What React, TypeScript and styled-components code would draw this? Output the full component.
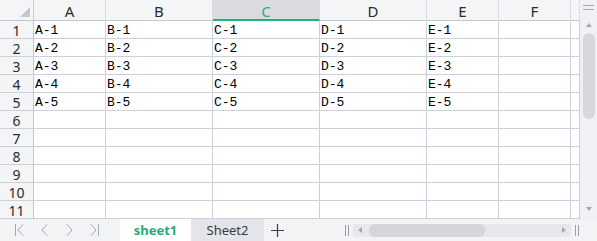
import styled, { createGlobalStyle } from "styled-components";

const GlobalStyle = createGlobalStyle`
  body {
    margin: 0;
    background: #ffffff;
  }
`;

const COLS = "34px 72px 107px 107px 107px 72px 72px 9px";
const LETTERS = ["A", "B", "C", "D", "E", "F"];
const SELECTED = "C";

const Book = styled.div`
  width: 597px;
  height: 241px;
  display: flex;
  flex-direction: column;
  overflow: hidden;
  font-family: "Noto Sans", "Liberation Sans", sans-serif;
`;

const Body = styled.div`
  display: flex;
  flex-direction: row;
  height: 219px;
`;

const Sheet = styled.div`
  width: 580px;
  display: flex;
  flex-direction: column;
`;

const Row = styled.div<{ $head?: boolean }>`
  display: grid;
  grid-template-columns: ${COLS};
  grid-template-rows: minmax(0, 1fr);
  height: ${(p) => (p.$head ? "21px" : "18px")};
  flex-shrink: 0;
  overflow: hidden;
  background: ${(p) => (p.$head ? "#f4f5f7" : "#ffffff")};

  & > * {
    box-sizing: border-box;
    min-height: 0;
  }
`;

const Corner = styled.div`
  position: relative;
  background: #f4f5f7;
  border-right: 1px solid #c9ccd6;
  border-bottom: 1px solid #c2c6d1;

  &::after {
    content: "";
    position: absolute;
    right: 3px;
    bottom: 3px;
    width: 0;
    height: 0;
    border-left: 10px solid transparent;
    border-bottom: 10px solid #c4c7ce;
  }
`;

const ColHead = styled.div<{ $active?: boolean }>`
  display: flex;
  align-items: center;
  justify-content: center;
  font-size: 15px;
  line-height: 16px;
  padding-top: 2px;
  color: ${(p) => (p.$active ? "#2aae86" : "#2b2b2b")};
  background: ${(p) => (p.$active ? "#d9dbe1" : "#f4f5f7")};
  border-right: 1px solid #dcdee5;
  border-bottom: ${(p) => (p.$active ? "2px solid #1fb27a" : "1px solid #c2c6d1")};
`;

const RowHead = styled.div`
  display: flex;
  align-items: center;
  justify-content: center;
  font-size: 14px;
  line-height: 15px;
  padding-top: 2px;
  color: #2b2b2b;
  background: #f4f5f7;
  border-right: 1px solid #c2c6d1;
  border-bottom: 1px solid #cdd0da;
`;

const Cell = styled.div`
  font-family: "Liberation Mono", "DejaVu Sans Mono", monospace;
  font-size: 13px;
  line-height: 15px;
  padding: 2px 0 0 1px;
  color: #000000;
  border-right: 1px solid #cdd0da;
  border-bottom: 1px solid #cdd0da;
  white-space: nowrap;
  overflow: hidden;
`;

const VScroll = styled.div`
  width: 17px;
  background: #f0f1f4;
  display: flex;
  flex-direction: column;
  align-items: center;
`;

const Grip = styled.div`
  margin-top: 5px;
  width: 11px;
  height: 3px;
  border-top: 1px solid #a9adb6;
  border-bottom: 1px solid #a9adb6;
`;

const Arrow = styled.div<{ $dir: "up" | "down" | "left" | "right" }>`
  width: 0;
  height: 0;
  border: 3px solid transparent;
  ${(p) => p.$dir === "up" && "border-bottom: 4px solid #a4a8b1; border-top-width: 0;"}
  ${(p) => p.$dir === "down" && "border-top: 4px solid #a4a8b1; border-bottom-width: 0;"}
  ${(p) => p.$dir === "left" && "border-right: 4px solid #a4a8b1; border-left-width: 0;"}
  ${(p) => p.$dir === "right" && "border-left: 4px solid #a4a8b1; border-right-width: 0;"}
`;

const VTrack = styled.div`
  flex: 1;
  width: 100%;
  display: flex;
  flex-direction: column;
  align-items: center;
  padding: 13px 0 8px;
  box-sizing: border-box;
`;

const VThumb = styled.div`
  margin-top: 6px;
  width: 12px;
  height: 86px;
  border-radius: 6px;
  background: #d6d8dd;
`;

const Spacer = styled.div`
  flex: 1;
`;

const Bar = styled.div`
  height: 22px;
  display: flex;
  flex-direction: row;
  align-items: stretch;
  background: #f2f3f5;
`;

const Nav = styled.div`
  width: 120px;
  display: flex;
  align-items: center;
  padding-left: 14px;
  gap: 14px;
  box-sizing: border-box;
`;

const Tab = styled.div<{ $active?: boolean }>`
  width: ${(p) => (p.$active ? "71px" : "73px")};
  display: flex;
  align-items: center;
  justify-content: center;
  font-size: 13px;
  font-weight: ${(p) => (p.$active ? 700 : 400)};
  color: ${(p) => (p.$active ? "#1fae78" : "#3c3c3c")};
  background: ${(p) => (p.$active ? "#ffffff" : "#e3e5ea")};
`;

const Plus = styled.div`
  width: 26px;
  display: flex;
  align-items: center;
  justify-content: center;
`;

const Split = styled.div`
  width: 4px;
  height: 11px;
  margin: 0 4px;
  align-self: center;
  border-left: 1px solid #9a9ea7;
  border-right: 1px solid #9a9ea7;
  box-sizing: border-box;
`;

const HTrack = styled.div`
  width: 218px;
  height: 13px;
  align-self: center;
  background: #e7e8ec;
  display: flex;
  align-items: center;
  padding: 0 5px 0 5px;
  box-sizing: border-box;
`;

const HThumb = styled.div`
  margin-left: 7px;
  width: 116px;
  height: 13px;
  border-radius: 6px;
  background: #d4d6dc;
`;

const NavIcon = ({ kind }: { kind: "first" | "prev" | "next" | "last" }) => (
  <svg width="11" height="14" viewBox="0 0 11 14" fill="none" stroke="#a3a7b0" strokeWidth="1">
    {kind === "first" && (
      <>
        <path d="M1.5 1v12" />
        <path d="M9 1.5L4 7l5 5.5" />
      </>
    )}
    {kind === "prev" && <path d="M8 1.5L3 7l5 5.5" />}
    {kind === "next" && <path d="M3 1.5L8 7l-5 5.5" />}
    {kind === "last" && (
      <>
        <path d="M2 1.5L7 7l-5 5.5" />
        <path d="M9.5 1v12" />
      </>
    )}
  </svg>
);

const data: string[][] = [1, 2, 3, 4, 5].map((n) => LETTERS.slice(0, 5).map((l) => `${l}-${n}`));

export default function App() {
  const rows = Array.from({ length: 11 }, (_, i) => i + 1);
  return (
    <>
      <GlobalStyle />
      <Book>
        <Body>
          <Sheet>
            <Row $head>
              <Corner />
              {LETTERS.map((l) => (
                <ColHead key={l} $active={l === SELECTED}>
                  {l}
                </ColHead>
              ))}
              <ColHead />
            </Row>
            {rows.map((r) => (
              <Row key={r}>
                <RowHead>{r}</RowHead>
                {LETTERS.map((l, ci) => (
                  <Cell key={l}>{data[r - 1]?.[ci] ?? ""}</Cell>
                ))}
                <Cell />
              </Row>
            ))}
          </Sheet>
          <VScroll>
            <Grip />
            <VTrack>
              <Arrow $dir="up" />
              <VThumb />
              <Spacer />
              <Arrow $dir="down" />
            </VTrack>
          </VScroll>
        </Body>
        <Bar>
          <Nav>
            <NavIcon kind="first" />
            <NavIcon kind="prev" />
            <NavIcon kind="next" />
            <NavIcon kind="last" />
          </Nav>
          <Tab $active>sheet1</Tab>
          <Tab>Sheet2</Tab>
          <Plus>
            <svg width="13" height="13" viewBox="0 0 13 13" stroke="#3a3f4a" strokeWidth="1.2">
              <path d="M6.5 0v13M0 6.5h13" />
            </svg>
          </Plus>
          <Spacer />
          <Split />
          <HTrack>
            <Arrow $dir="left" />
            <HThumb />
            <Spacer />
            <Arrow $dir="right" />
          </HTrack>
          <Split />
          <div style={{ width: 14 }} />
        </Bar>
      </Book>
    </>
  );
}
